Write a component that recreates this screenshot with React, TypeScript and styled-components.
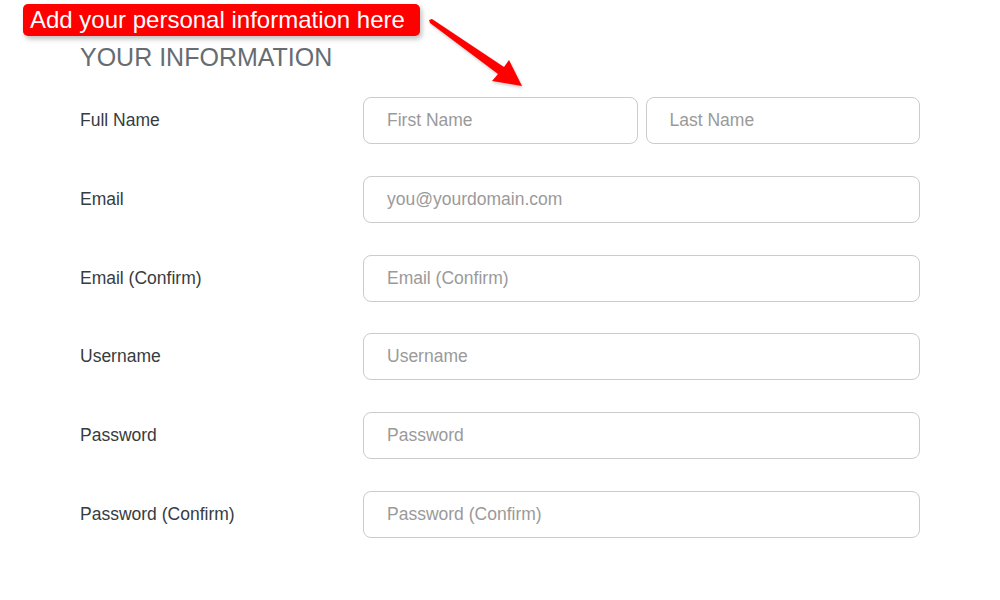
import React from "react";
import styled, { createGlobalStyle } from "styled-components";

const Global = createGlobalStyle`
  html, body { margin: 0; padding: 0; background: #fff; }
  body { font-family: "Liberation Sans", Arial, sans-serif; }
  * { box-sizing: border-box; }
`;

const Page = styled.div`
  position: relative;
  width: 1000px;
  height: 600px;
  background: #fff;
  padding: 42px 0 0 80px;
  overflow: hidden;
`;

const Heading = styled.h2`
  margin: 0 0 25px 0;
  font-size: 25px;
  line-height: 30px;
  font-weight: 400;
  color: #656c72;
`;

const Form = styled.div`
  display: flex;
  flex-direction: column;
  gap: 31.8px;
`;

const Row = styled.div`
  display: grid;
  grid-template-columns: 283px 557px;
  align-items: center;
`;

const Label = styled.label`
  font-size: 17.5px;
  color: #363c41;
`;

const Fields = styled.div`
  display: flex;
  gap: 8px;
`;

const Input = styled.input`
  flex: 1;
  min-width: 0;
  height: 47px;
  border: 1px solid #cbcbcb;
  border-radius: 8px;
  padding: 0 23px;
  font-family: "Liberation Sans", Arial, sans-serif;
  font-size: 17.5px;
  color: #333;
  background: #fff;
  outline: none;
  &::placeholder { color: #9a9a9a; }
`;

const Banner = styled.div`
  position: absolute;
  left: 23px;
  top: 4px;
  width: 397px;
  height: 32px;
  background: #f00;
  border-radius: 5px;
  color: #fff;
  font-size: 24px;
  line-height: 31px;
  padding-left: 7px;
  box-shadow: 2px 3px 5px rgba(0,0,0,0.25);
  white-space: nowrap;
`;

const Arrow = styled.svg`
  position: absolute;
  left: 0;
  top: 0;
  pointer-events: none;
`;

const rows: { label: string; fields: string[] }[] = [
  { label: "Full Name", fields: ["First Name", "Last Name"] },
  { label: "Email", fields: ["you@yourdomain.com"] },
  { label: "Email (Confirm)", fields: ["Email (Confirm)"] },
  { label: "Username", fields: ["Username"] },
  { label: "Password", fields: ["Password"] },
  { label: "Password (Confirm)", fields: ["Password (Confirm)"] },
];

export default function App() {
  return (
    <>
      <Global />
      <Page>
        <Heading>YOUR INFORMATION</Heading>
        <Form>
          {rows.map((r) => (
            <Row key={r.label}>
              <Label>{r.label}</Label>
              <Fields>
                {r.fields.map((f) => (
                  <Input key={f} placeholder={f} type={f.startsWith("Password") ? "password" : "text"} />
                ))}
              </Fields>
            </Row>
          ))}
        </Form>
        <Banner>Add your personal information here</Banner>
        <Arrow width="1000" height="120" viewBox="0 0 1000 120">
          <polygon
            points="429,20 432,19 504,67 509,60 522,86 492,81 498,74 430,23"
            fill="#f00"
            style={{ filter: "drop-shadow(1px 2px 1.5px rgba(0,0,0,0.2))" }}
          />
        </Arrow>
      </Page>
    </>
  );
}
